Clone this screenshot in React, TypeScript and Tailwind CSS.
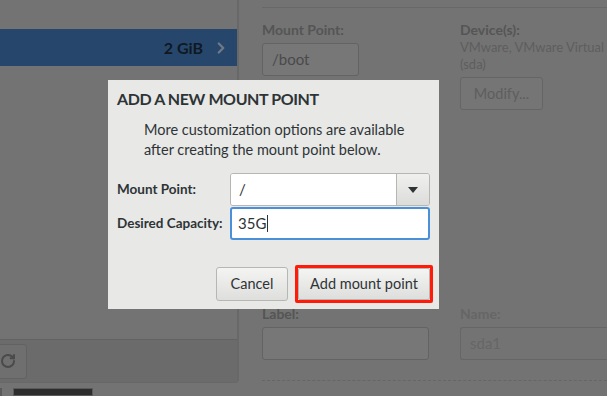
import { ChevronRight, RotateCw } from "lucide-react";

const font = { fontFamily: "Lato, 'Noto Sans', sans-serif" };

function Field({
  label,
  value,
  width,
}: {
  label: string;
  value?: string;
  width: string;
}) {
  return (
    <div className="flex flex-col">
      <p className="text-[14px] font-bold leading-[18px] text-[#555555]">{label}</p>
      <div
        className={`${width} mt-[4px] h-[33px] rounded-[3px] border border-[#636363] bg-[#777777] px-[9px] text-[15px] leading-[31px] text-[#4a4a4a]`}
      >
        {value}
      </div>
    </div>
  );
}

export default function App() {
  return (
    <div
      className="relative flex h-[396px] w-[607px] overflow-hidden bg-[#737373]"
      style={font}
    >
      {/* Left column */}
      <div className="flex w-[239px] shrink-0 flex-col">
        <div className="flex h-[384px] flex-col rounded-br-[4px] border-r-2 border-b border-[#686868]">
          <div className="h-[29px]" />
          <div className="flex h-[37px] items-center justify-end bg-[#26476b] pr-[7px]">
            <span className="text-[16px] font-bold text-[#0f1823]">2 GiB</span>
            <ChevronRight size={18} strokeWidth={3} className="ml-[9px] text-[#6f7a86]" />
          </div>
          <div className="flex-1" />
          <div className="flex h-[43px] items-center border-t border-[#626262] bg-[#6b6b6b]">
            <div className="-ml-[12px] flex h-[35px] w-[39px] items-center justify-center rounded-[3px] border border-[#626262] bg-[#6f6f6f]">
              <RotateCw size={16} strokeWidth={3} className="text-[#4a4a4a]" />
            </div>
          </div>
        </div>
        <div className="mt-[5px] flex gap-[11px]">
          <div className="h-[8px] w-[2px] bg-[#5a5a5a]" />
          <div className="h-[8px] w-[80px] border border-[#5a5a5a] bg-[#2d2d2d]" />
        </div>
      </div>

      {/* Right column */}
      <div className="flex min-w-0 flex-1 flex-col pl-[23px] pt-[7px]">
        <div className="border-t border-[#686868]" />
        <div className="mt-[13px] flex">
          <div className="w-[198px] shrink-0">
            <Field label="Mount Point:" value="/boot" width="w-[97px]" />
          </div>
          <div className="flex flex-col whitespace-nowrap">
            <p className="text-[14px] font-bold leading-[18px] text-[#555555]">Device(s):</p>
            <p className="text-[13px] leading-[17px] text-[#5e5e5e]">VMware, VMware Virtual</p>
            <p className="text-[13px] leading-[17px] text-[#5e5e5e]">(sda)</p>
            <div className="mt-[4px] flex h-[33px] w-[83px] items-center justify-center rounded-[3px] border border-[#656565] bg-[#757575] text-[14.5px] text-[#5e5e5e]">
              Modify...
            </div>
          </div>
        </div>
        <div className="mt-[195px] flex">
          <div className="w-[198px] shrink-0">
            <Field label="Label:" width="w-[167px]" />
          </div>
          <div className="flex-1">
            <p className="text-[14px] font-bold leading-[18px] text-[#666666]">Name:</p>
            <div className="mt-[4px] h-[33px] rounded-l-[3px] border border-r-0 border-[#666666] bg-[#737373] px-[9px] text-[15px] leading-[31px] text-[#666666]">
              sda1
            </div>
          </div>
        </div>
        <div className="mt-[20px] border-t border-dashed border-[#666666]" />
      </div>

      {/* Dialog */}
      <div className="absolute left-[108px] top-[80px] flex h-[229px] w-[331px] flex-col bg-[#e8e8e7] pl-[9px] pr-[6px] pt-[9px] text-[#2e3436]">
        <h2 className="text-[16px] font-bold leading-[20px] tracking-[-0.4px]">ADD A NEW MOUNT POINT</h2>
        <p className="mt-[11px] pl-[27px] text-[14.5px] leading-[20px]">
          More customization options are available
          <br />
          after creating the mount point below.
        </p>
        <div className="mt-[13px] flex items-center">
          <span className="w-[113px] text-[13.5px] font-bold">Mount Point:</span>
          <div className="flex h-[33px] w-[200px] overflow-hidden rounded-[3px] border border-[#b6b6b3]">
            <div className="flex-1 bg-white px-[8px] text-[15px] leading-[31px]">/</div>
            <div className="flex w-[33px] items-center justify-center border-l border-[#b6b6b3] bg-gradient-to-b from-[#f0f0ef] to-[#dcdcda]">
              <svg width="10" height="6" viewBox="0 0 10 6">
                <path d="M0 0h10L5 6z" fill="#2e3436" />
              </svg>
            </div>
          </div>
        </div>
        <div className="mt-[1px] flex items-center">
          <span className="w-[113px] text-[13.5px] font-bold">Desired Capacity:</span>
          <div className="flex h-[33px] w-[200px] items-center rounded-[3px] border-2 border-[#4a90d9] bg-white px-[6px] text-[15px]">
            35G
            <span className="ml-[1px] h-[17px] w-px bg-[#2e3436]" />
          </div>
        </div>
        <div className="mt-[25px] flex items-center justify-end gap-[7px]">
          <button className="h-[34px] w-[72px] rounded-[3px] border border-[#b6b6b3] bg-gradient-to-b from-[#f4f4f3] to-[#dededc] text-[14.5px] text-[#2e3436]">
            Cancel
          </button>
          <div className="rounded-[2px] border-[3px] border-[#ff1a0a]">
            <button className="h-[32px] w-[132px] rounded-[2px] border border-[#b6b6b3] bg-gradient-to-b from-[#f4f4f3] to-[#dededc] text-[14.5px] text-[#2e3436]">
              Add mount point
            </button>
          </div>
        </div>
      </div>
    </div>
  );
}
